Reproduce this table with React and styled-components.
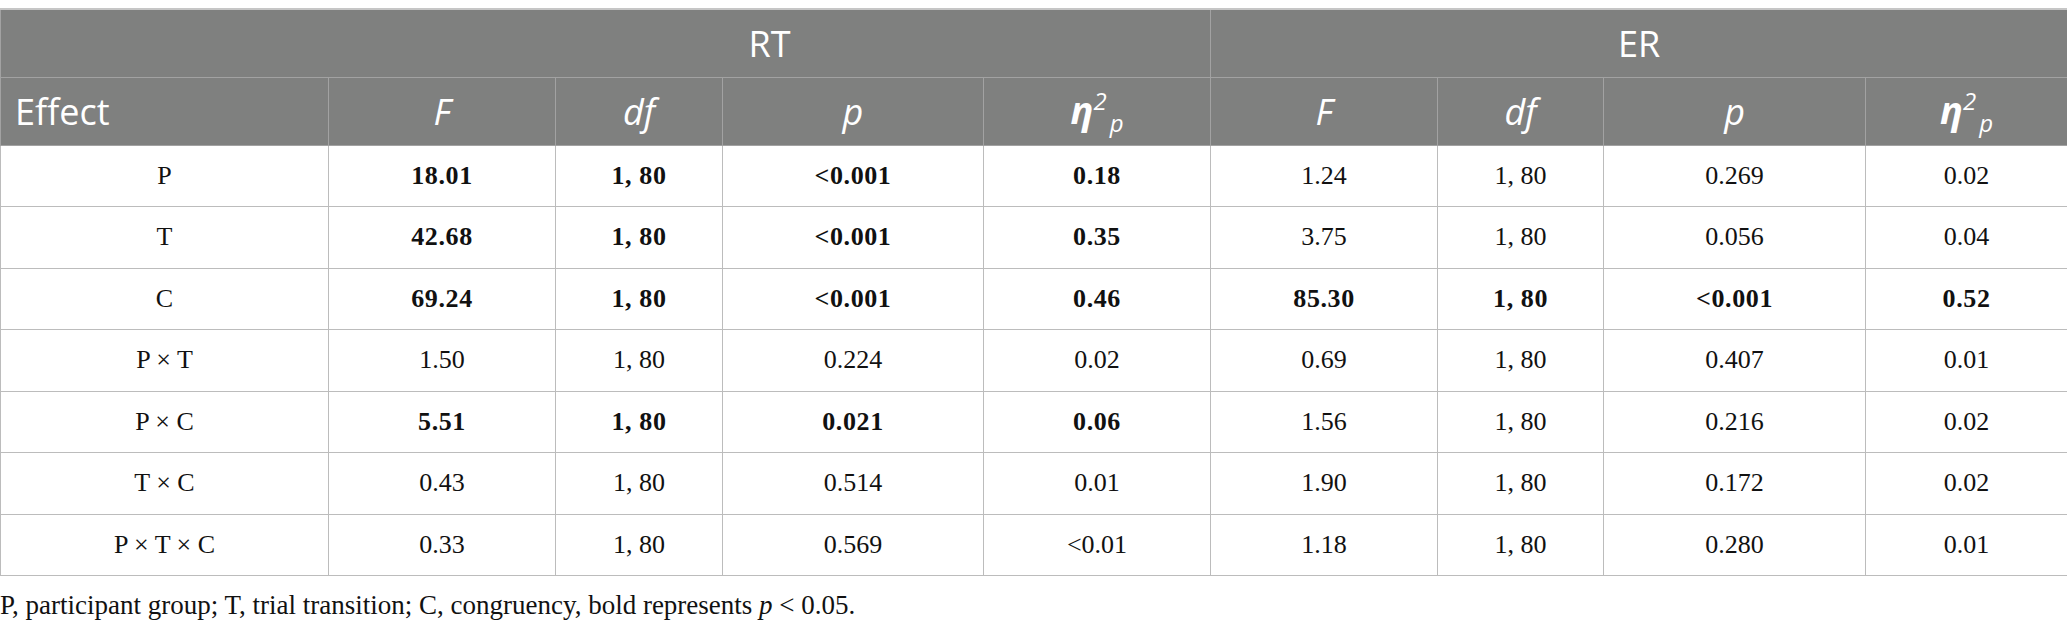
import styled, { createGlobalStyle } from "styled-components";

const GlobalStyle = createGlobalStyle`
  body {
    margin: 0;
    background: #fff;
  }
`;

const columns = [328, 227, 167, 261, 227, 227, 166, 262, 202];

const rows = [
  { effect: "P", rt: ["18.01", "1, 80", "<0.001", "0.18"], er: ["1.24", "1, 80", "0.269", "0.02"], rtBold: true },
  { effect: "T", rt: ["42.68", "1, 80", "<0.001", "0.35"], er: ["3.75", "1, 80", "0.056", "0.04"], rtBold: true },
  { effect: "C", rt: ["69.24", "1, 80", "<0.001", "0.46"], er: ["85.30", "1, 80", "<0.001", "0.52"], rtBold: true, erBold: true },
  { effect: "P × T", rt: ["1.50", "1, 80", "0.224", "0.02"], er: ["0.69", "1, 80", "0.407", "0.01"] },
  { effect: "P × C", rt: ["5.51", "1, 80", "0.021", "0.06"], er: ["1.56", "1, 80", "0.216", "0.02"], rtBold: true },
  { effect: "T × C", rt: ["0.43", "1, 80", "0.514", "0.01"], er: ["1.90", "1, 80", "0.172", "0.02"] },
  { effect: "P × T × C", rt: ["0.33", "1, 80", "0.569", "<0.01"], er: ["1.18", "1, 80", "0.280", "0.01"] },
];

const EtaLabel = () => (
  <>
    <Eta>η</Eta>
    <Sup>2</Sup>
    <Sub>p</Sub>
  </>
);

const statHeads = [<i>F</i>, <i>df</i>, <i>p</i>, <EtaLabel />];

const App = () => {
  return (
    <Wrapper>
      <GlobalStyle />
      <Table>
        <colgroup>
          {columns.map((width, index) => (
            <col key={index} style={{ width }} />
          ))}
        </colgroup>
        <thead>
          <GroupRow>
            <HeadCell $blank />
            <HeadCell colSpan={4}>RT</HeadCell>
            <HeadCell colSpan={4}>ER</HeadCell>
          </GroupRow>
          <LabelRow>
            <HeadCell $left>Effect</HeadCell>
            {[...statHeads, ...statHeads].map((label, index) => (
              <HeadCell key={index}>{label}</HeadCell>
            ))}
          </LabelRow>
        </thead>
        <tbody>
          {rows.map((row) => (
            <BodyRow key={row.effect}>
              <Cell>{row.effect}</Cell>
              {row.rt.map((value, index) => (
                <Cell key={"rt" + index} $bold={row.rtBold}>
                  {value}
                </Cell>
              ))}
              {row.er.map((value, index) => (
                <Cell key={"er" + index} $bold={row.erBold}>
                  {value}
                </Cell>
              ))}
            </BodyRow>
          ))}
        </tbody>
      </Table>
      <Note>
        P, participant group; T, trial transition; C, congruency, bold represents <i>p</i> &lt; 0.05.
      </Note>
    </Wrapper>
  );
};

const Wrapper = styled.div`
  padding-top: 8px;
  width: 2067px;
`;

const Table = styled.table`
  width: 2067px;
  table-layout: fixed;
  border-collapse: collapse;
  border-top: 2px solid #c6c6c6;
`;

const GroupRow = styled.tr`
  height: 68px;
`;

const LabelRow = styled.tr`
  height: 68px;
`;

const HeadCell = styled.th`
  background: #7f807f;
  color: #fff;
  font-family: "Open Sans", sans-serif;
  font-weight: 400;
  font-size: 36px;
  text-align: ${(p) => (p.$left ? "left" : "center")};
  padding: 0 ${(p) => (p.$left ? "14px" : "0")};
  border: 1px solid #a2a2a2;
  border-right-color: ${(p) => (p.$blank ? "#7f807f" : "#a2a2a2")};
  border-top: none;
  vertical-align: middle;

  & i {
    font-style: italic;
  }
`;

const Eta = styled.i`
  font-weight: 700;
  font-size: 38px;
`;

const Sup = styled.sup`
  font-size: 24px;
  font-style: italic;
  vertical-align: 14px;
`;

const Sub = styled.sub`
  font-size: 24px;
  font-style: italic;
  vertical-align: -8px;
  margin-left: 3px;
`;

const BodyRow = styled.tr`
  height: 61.5px;
`;

const Cell = styled.td`
  font-family: "Liberation Serif", "Times New Roman", serif;
  font-size: 26px;
  font-weight: ${(p) => (p.$bold ? 700 : 400)};
  letter-spacing: ${(p) => (p.$bold ? "0.6px" : "0")};
  color: #111;
  text-align: center;
  vertical-align: middle;
  padding: 0;
  border: 1px solid #bcbcbc;
`;

const Note = styled.p`
  margin: 14px 0 0;
  font-family: "Liberation Serif", "Times New Roman", serif;
  font-size: 27px;
  line-height: 31px;
  color: #111;
`;

export default App;
